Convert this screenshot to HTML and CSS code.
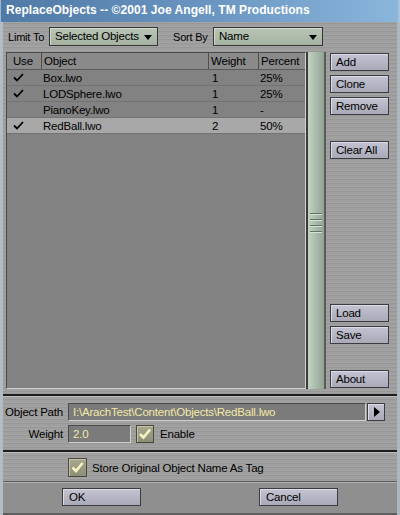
FILE: index.html
```html
<!DOCTYPE html>
<html>
<head>
<meta charset="utf-8">
<link rel="stylesheet" href="styles.css">
</head>
<body>
<div class="title">ReplaceObjects -- ©2001 Joe Angell, TM Productions</div>
<div class="frame">
  <div class="toolbar">
    <span class="lbl lbl-limit">Limit To</span>
    <div class="dd dd-limit">Selected Objects<span class="arr"></span></div>
    <span class="lbl lbl-sort">Sort By</span>
    <div class="dd dd-sort">Name<span class="arr"></span></div>
  </div>

  <div class="main">
    <div class="list">
      <div class="row head">
        <div class="c use">Use</div><div class="c obj">Object</div><div class="c wt">Weight</div><div class="c pct">Percent</div>
      </div>
      <div class="row">
        <div class="c use"><svg class="tick" width="11" height="9" viewBox="0 0 11 9"><polyline points="1,4.5 4,7.5 10,1" fill="none" stroke="#000" stroke-width="1.8"/></svg></div>
        <div class="c obj">Box.lwo</div><div class="c wt">1</div><div class="c pct">25%</div>
      </div>
      <div class="row">
        <div class="c use"><svg class="tick" width="11" height="9" viewBox="0 0 11 9"><polyline points="1,4.5 4,7.5 10,1" fill="none" stroke="#000" stroke-width="1.8"/></svg></div>
        <div class="c obj">LODSphere.lwo</div><div class="c wt">1</div><div class="c pct">25%</div>
      </div>
      <div class="row">
        <div class="c use"></div>
        <div class="c obj">PianoKey.lwo</div><div class="c wt">1</div><div class="c pct">-</div>
      </div>
      <div class="row sel">
        <div class="c use"><svg class="tick" width="11" height="9" viewBox="0 0 11 9"><polyline points="1,4.5 4,7.5 10,1" fill="none" stroke="#000" stroke-width="1.8"/></svg></div>
        <div class="c obj">RedBall.lwo</div><div class="c wt">2</div><div class="c pct">50%</div>
      </div>
    </div>
    <div class="scroll">
      <div class="grip"><i></i><i></i><i></i><i></i></div>
    </div>
    <div class="btns">
      <div class="btn b-add">Add</div>
      <div class="btn b-gap">Clone</div>
      <div class="btn b-gap">Remove</div>
      <div class="btn b-clear">Clear All</div>
      <div class="btn b-load">Load</div>
      <div class="btn b-gap">Save</div>
      <div class="btn b-about">About</div>
    </div>
  </div>

  <div class="sep sep1"></div>

  <div class="frow frow-path">
    <span class="flbl">Object Path</span>
    <div class="field f-path">I:\ArachTest\Content\Objects\RedBall.lwo</div>
    <div class="abtn"><span class="rarr"></span></div>
  </div>
  <div class="frow frow-weight">
    <span class="flbl">Weight</span>
    <div class="field f-weight">2.0</div>
    <div class="cb"><svg width="18" height="18" viewBox="0 0 18 18"><polyline points="4,9 7.5,12.5 14,4.5" fill="none" stroke="#f6f2c4" stroke-width="2.6"/></svg></div>
    <span class="cbl">Enable</span>
  </div>

  <div class="sep sep2"></div>

  <div class="frow frow-store">
    <div class="cb cb-store"><svg width="19" height="19" viewBox="0 0 19 19"><polyline points="4.5,9.5 8,13 14.5,5" fill="none" stroke="#f6f2c4" stroke-width="2.6"/></svg></div>
    <span class="cbl">Store Original Object Name As Tag</span>
  </div>

  <div class="band">
    <div class="btn bb">OK</div>
    <div class="btn bb">Cancel</div>
  </div>
</div>
</body>
</html>
```

FILE: styles.css
```css
* { box-sizing: border-box; margin: 0; padding: 0; }
html, body { width: 400px; height: 515px; overflow: hidden; }
body {
  font-family: "Liberation Sans", Arial, sans-serif;
  font-size: 11px;
  letter-spacing: -0.2px;
  color: #000;
  background: #9c9c9c;
}
.title {
  height: 22px;
  background: linear-gradient(to right, #4f79a6, #6c97c2 55%, #8ab6dc);
  color: #fff;
  font-weight: bold;
  font-size: 12px;
  letter-spacing: 0.05px;
  line-height: 21px;
  padding-left: 5px;
  border-left: 1px solid #9fb6cc;
  border-right: 2px solid #a8c4dc;
}
.frame {
  height: 493px;
  display: flex;
  flex-direction: column;
  border-left: 3px solid #b3bbc5;
  border-right: 3px solid #aeb6c0;
  background-color: #9f9f9f;
  background-image: repeating-linear-gradient(180deg, rgba(255,255,255,0.06) 0 1px, rgba(0,0,0,0.05) 1px 2px, rgba(255,255,255,0) 2px 4px);
}
.toolbar { display: flex; align-items: center; height: 19px; margin-top: 5px; }
.lbl { display: block; font-size: 11px; }
.lbl-limit { width: 41px; margin-left: 5px; }
.lbl-sort { width: 40px; margin-left: 15px; }
.dd {
  position: relative;
  height: 19px;
  line-height: 17px;
  padding-left: 5px;
  border: 1px solid #353535;
  background: linear-gradient(#b9c5b5, #a5b2a1);
  box-shadow: inset 1px 1px 0 #d2dcce;
  font-size: 11.5px;
}
.dd-limit { width: 109px; }
.dd-sort { width: 110px; }
.arr {
  position: absolute;
  right: 5px; top: 7px;
  width: 0; height: 0;
  border-left: 4px solid transparent;
  border-right: 4px solid transparent;
  border-top: 5px solid #000;
}
.main { display: flex; height: 337px; margin-top: 6px; padding-left: 3px; }
.list {
  width: 300px;
  height: 337px;
  background: #828282;
  border-top: 1px solid #4a4a4a;
  border-left: 1px solid #4a4a4a;
  border-right: 1px solid #d2d2d2;
  border-bottom: 1px solid #d2d2d2;
  font-size: 11.5px;
}
.row { display: flex; height: 16px; line-height: 16px; border-bottom: 1px solid #737373; }
.row.head { height: 17px; line-height: 17px; background: #8a8a8a; border-bottom: 1px solid #5a5a5a; }
.row.sel { background: #a8a8a8; }
.c { overflow: hidden; white-space: nowrap; padding-left: 2px; }
.use { width: 34px; padding-left: 6px; }
.obj { width: 167px; }
.wt { width: 50px; padding-left: 4px; }
.pct { width: 47px; }
.head .c { padding-left: 2px; }
.head .use { padding-left: 6px; }
.head .obj, .head .wt, .head .pct { border-left: 1px solid #4e4e4e; }
.tick { display: block; margin-top: 3px; }
.scroll {
  width: 20px;
  height: 337px;
  border-left: 2px solid #3c3c3c;
  border-right: 2px solid #5a5a5a;
  background: linear-gradient(to right, #c3d2c3, #adbdad 45%, #93a493);
  display: flex;
  flex-direction: column;
  justify-content: center;
}
.grip { display: flex; flex-direction: column; gap: 4px; padding: 0 2px; margin-top: 4px; }
.grip i { display: block; height: 2px; border-top: 1px solid #627362; border-bottom: 1px solid #d5e2d5; }
.btns { display: flex; flex-direction: column; margin-left: 4px; width: 59px; }
.btn {
  height: 18px;
  line-height: 16px;
  padding-left: 5px;
  border: 1px solid #3b3b42;
  background: linear-gradient(#c3c3d1, #a9a9b8);
  box-shadow: inset 1px 1px 0 #dcdce6;
  font-size: 11.5px;
}
.b-add { margin-top: 1px; }
.b-gap { margin-top: 4px; }
.b-clear { margin-top: 26px; }
.b-load { margin-top: 145px; }
.b-about { margin-top: 26px; }
.sep { border-top: 2px solid #1c1c1c; border-bottom: 1px solid #bdbdbd; height: 3px; }
.sep1 { margin-top: 5px; }
.frow { display: flex; align-items: center; height: 18px; }
.frow-path { margin-top: 6px; }
.frow-weight { margin-top: 4px; }
.flbl { width: 60px; text-align: right; margin-right: 5px; font-size: 11.5px; }
.field {
  height: 18px;
  line-height: 16px;
  padding-left: 4px;
  background: #7b7b7b;
  color: #f2eaa6;
  border-top: 1px solid #4a4a4a;
  border-left: 1px solid #4a4a4a;
  border-right: 1px solid #d0d0d0;
  border-bottom: 1px solid #d0d0d0;
  font-size: 11.5px;
  white-space: nowrap;
  overflow: hidden;
}
.f-path { width: 298px; }
.f-weight { width: 63px; }
.abtn {
  width: 18px; height: 18px;
  margin-left: 1px;
  border: 1px solid #3b3b42;
  background: linear-gradient(#c3c3d1, #a9a9b8);
  box-shadow: inset 1px 1px 0 #dcdce6;
  display: flex; align-items: center; justify-content: center;
}
.rarr { width: 0; height: 0; border-top: 5px solid transparent; border-bottom: 5px solid transparent; border-left: 6px solid #000; margin-left: 1px; }
.cb {
  width: 18px; height: 18px;
  margin-left: 5px;
  border: 1px solid #4a4a3c;
  background: linear-gradient(#a8a88e, #8e8e76);
  box-shadow: inset 1px 1px 0 #c4c4aa;
  display: flex; align-items: center; justify-content: center;
}
.cb svg { display: block; flex: none; }
.cbl { margin-left: 6px; font-size: 11.5px; }
.sep2 { margin-top: 7px; }
.frow-store { margin-top: 5px; height: 19px; padding-left: 65px; }
.cb-store { width: 19px; height: 19px; margin-left: 0; }
.cb-store + .cbl { margin-left: 5px; }
.band {
  margin-top: 4px;
  flex: 1;
  display: flex;
  justify-content: space-around;
  align-items: flex-start;
  padding-top: 6px;
  background: #8f8f8f;
  border-top: 1px solid #5a5a5a;
  box-shadow: inset 0 1px 0 #b0b0b0;
  border-bottom: 2px solid #5e5e5e;
}
.bb { width: 79px; padding-left: 6px; }
```
